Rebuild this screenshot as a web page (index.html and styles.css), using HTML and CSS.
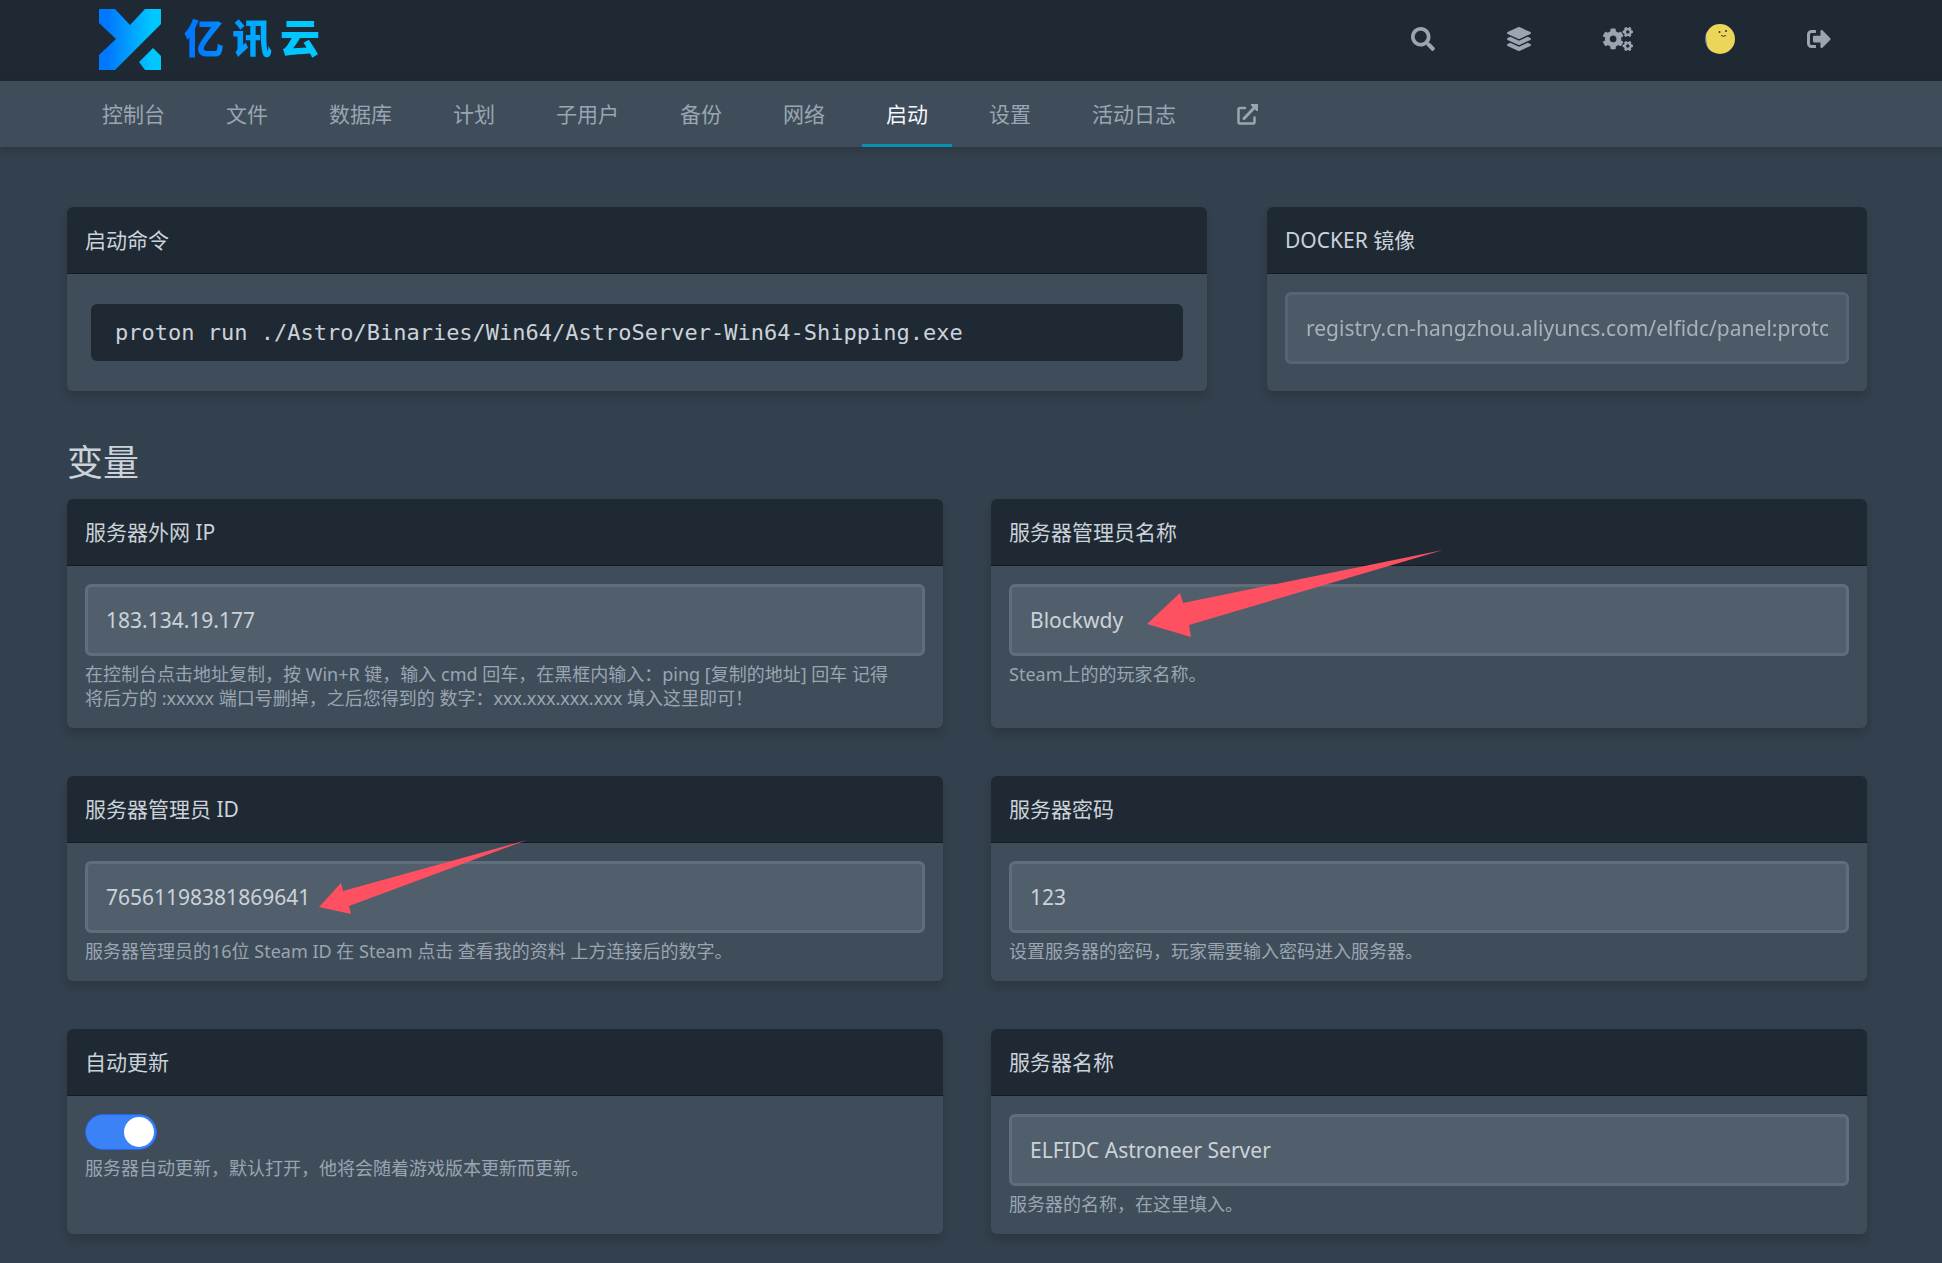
FILE: index.html
```html
<!DOCTYPE html>
<html lang="zh-CN">
<head>
<meta charset="utf-8">
<meta name="viewport" content="width=device-width, initial-scale=1">
<title>启动</title>
<link rel="stylesheet" href="styles.css">
</head>
<body>
<header class="topbar">
  <div class="wrap topbar-inner">
    <a class="logo" href="#">
      <svg class="logo-mark" viewBox="0 0 62 61" aria-hidden="true">
        <defs>
          <linearGradient id="brand" gradientUnits="userSpaceOnUse" x1="8" y1="0" x2="54" y2="0">
            <stop offset="0" stop-color="#0078ff"/>
            <stop offset="1" stop-color="#00c8ff"/>
          </linearGradient>
        </defs>
        <path fill="url(#brand)" d="M0 0h16l15 16L46 0h16v15L16 61H0V46l17-16L0 14zM54 39l8 8v14H46l-6-8z"/>
      </svg>
      <span class="logo-text"><span>亿</span><span>讯</span><span>云</span></span>
    </a>
    <nav class="actions" aria-label="用户">
      <a href="#" aria-label="搜索"><svg class="icon" viewBox="0 0 512 512"><path d="M505 442.7L405.3 343c-4.500-4.500-10.600-7-17-7H372c27.600-35.300 44-79.700 44-128C416 93.100 322.900 0 208 0S0 93.100 0 208s93.100 208 208 208c48.300 0 92.700-16.400 128-44v16.300c0 6.400 2.500 12.500 7 17l99.700 99.700c9.400 9.400 24.600 9.400 33.900 0l28.300-28.300c9.400-9.400 9.400-24.600.1-34zM208 336c-70.700 0-128-57.200-128-128 0-70.700 57.200-128 128-128 70.700 0 128 57.200 128 128 0 70.700-57.200 128-128 128z"/></svg></a>
      <a href="#" aria-label="服务器"><svg class="icon" viewBox="0 0 512 512"><path d="M12.410 148.020l232.940 105.670c6.800 3.090 14.490 3.090 21.290 0l232.940-105.670c16.550-7.510 16.550-32.520 0-40.030L266.650 2.310a25.607 25.607 0 0 0-21.290 0L12.410 107.980c-16.550 7.510-16.550 32.530 0 40.040zm487.180 88.280l-58.090-26.330-161.640 73.270c-7.560 3.430-15.590 5.170-23.860 5.170s-16.290-1.740-23.860-5.170L70.510 209.970l-58.100 26.330c-16.550 7.500-16.550 32.500 0 40l232.940 105.590c6.800 3.080 14.490 3.080 21.290 0L499.590 276.300c16.550-7.500 16.550-32.500 0-40zm0 127.800l-57.870-26.230-161.860 73.370c-7.560 3.430-15.590 5.170-23.860 5.170s-16.290-1.740-23.860-5.170L70.290 337.870 12.410 364.100c-16.550 7.500-16.550 32.500 0 40l232.940 105.590c6.800 3.080 14.490 3.080 21.290 0L499.590 404.100c16.550-7.500 16.550-32.500 0-40z"/></svg></a>
      <a href="#" aria-label="管理"><svg class="icon icon-wide" viewBox="0 0 640 512"><path d="M512.1 191l-8.2 14.3c-3 5.3-9.4 7.5-15.1 5.4-11.8-4.4-22.6-10.7-32.1-18.6-4.6-3.8-5.8-10.5-2.8-15.7l8.2-14.3c-6.9-8-12.3-17.3-15.9-27.4h-16.5c-6 0-11.2-4.3-12.2-10.3-2-12-2.1-24.6 0-37.1 1-6 6.2-10.4 12.2-10.4h16.5c3.6-10.1 9-19.4 15.9-27.4l-8.2-14.3c-3-5.2-1.9-11.9 2.8-15.7 9.5-7.9 20.4-14.2 32.1-18.6 5.7-2.1 12.1.1 15.1 5.4l8.2 14.3c10.5-1.9 21.2-1.9 31.7 0L552 6.3c3-5.3 9.4-7.5 15.1-5.4 11.8 4.4 22.6 10.7 32.1 18.6 4.6 3.8 5.8 10.5 2.8 15.7l-8.2 14.3c6.9 8 12.3 17.3 15.9 27.4h16.5c6 0 11.2 4.3 12.2 10.3 2 12 2.1 24.6 0 37.1-1 6-6.2 10.4-12.2 10.4h-16.5c-3.6 10.1-9 19.4-15.9 27.4l8.2 14.3c3 5.2 1.9 11.9-2.8 15.7-9.5 7.9-20.4 14.2-32.1 18.6-5.7 2.1-12.1-.1-15.1-5.4l-8.2-14.3c-10.4 1.9-21.2 1.9-31.700 0zm-10.500-58.800c38.500 29.600 82.400-14.300 52.800-52.800-38.500-29.700-82.400 14.300-52.800 52.800zM386.300 286.100l33.700 16.800c10.100 5.800 14.500 18.100 10.500 29.100-8.900 24.200-26.400 46.400-42.600 65.800-7.400 8.900-20.200 11.100-30.300 5.300l-29.100-16.800c-16 13.700-34.600 24.600-54.900 31.700v33.600c0 11.600-8.300 21.600-19.700 23.600-24.600 4.200-50.400 4.400-75.900 0-11.500-2-20-11.900-20-23.600V418c-20.300-7.200-38.900-18-54.900-31.700L74 403c-10 5.800-22.900 3.600-30.300-5.300-16.200-19.400-33.300-41.600-42.200-65.700-4-10.900.4-23.200 10.500-29.100l33.300-16.800c-3.900-20.900-3.900-42.400 0-63.400L12 205.800c-10.100-5.800-14.600-18.100-10.500-29 8.900-24.200 26-46.400 42.200-65.800 7.400-8.900 20.200-11.100 30.300-5.300l29.100 16.800c16-13.700 34.600-24.600 54.900-31.700V57.100c0-11.500 8.200-21.500 19.600-23.500 24.600-4.200 50.500-4.400 76-.1 11.500 2 20 11.900 20 23.600v33.600c20.300 7.200 38.900 18 54.900 31.700l29.100-16.800c10-5.800 22.900-3.600 30.300 5.300 16.200 19.400 33.200 41.600 42.100 65.800 4 10.900.1 23.200-10 29.100l-33.700 16.800c3.900 21 3.900 42.500 0 63.500zm-117.600 21.100c59.200-77-28.700-164.900-105.700-105.700-59.200 77 28.700 164.900 105.700 105.700zm243.400 182.700l-8.200 14.300c-3 5.300-9.400 7.500-15.100 5.400-11.800-4.400-22.600-10.700-32.100-18.600-4.600-3.800-5.800-10.500-2.800-15.700l8.200-14.300c-6.900-8-12.300-17.300-15.900-27.400h-16.500c-6 0-11.200-4.300-12.200-10.300-2-12-2.100-24.600 0-37.100 1-6 6.200-10.400 12.200-10.400h16.500c3.600-10.100 9-19.400 15.900-27.400l-8.200-14.300c-3-5.200-1.900-11.900 2.800-15.700 9.500-7.900 20.400-14.200 32.100-18.600 5.700-2.100 12.100.1 15.100 5.400l8.200 14.300c10.500-1.900 21.200-1.900 31.700 0l8.200-14.300c3-5.300 9.400-7.500 15.100-5.400 11.800 4.400 22.600 10.700 32.100 18.600 4.600 3.800 5.800 10.500 2.800 15.700l-8.200 14.300c6.900 8 12.300 17.300 15.900 27.400h16.500c6 0 11.200 4.300 12.200 10.300 2 12 2.100 24.600 0 37.100-1 6-6.200 10.400-12.200 10.400h-16.500c-3.600 10.100-9 19.400-15.900 27.400l8.200 14.300c3 5.200 1.900 11.900-2.800 15.700-9.500 7.900-20.400 14.200-32.100 18.600-5.700 2.100-12.100-.1-15.100-5.400l-8.200-14.300c-10.400 1.900-21.200 1.900-31.700 0zM501.600 431c38.500 29.600 82.400-14.300 52.800-52.800-38.500-29.600-82.400 14.300-52.800 52.800z"/></svg></a>
      <a href="#" aria-label="账户"><svg class="avatar" viewBox="0 0 30 30">
        <defs><clipPath id="round"><circle cx="15" cy="15" r="15"/></clipPath></defs>
        <g clip-path="url(#round)">
          <path fill="#5f86a6" d="M0 8h8v22H0z"/>
          <path fill="#ecd65a" d="M1 11C3 4 8-1 15-1h16v32H5C3 26 1 18 1 11z"/>
          <circle cx="14.500" cy="8" r="1" fill="#3a3520"/>
          <circle cx="21" cy="7" r="1" fill="#3a3520"/>
          <path d="M16 11.500q2.500 1.500 5 0" fill="none" stroke="#3a3520"/>
        </g>
      </svg></a>
      <a href="#" aria-label="退出"><svg class="icon" viewBox="0 0 512 512"><path d="M497 273L329 441c-15 15-41 4.500-41-17v-96H152c-13.300 0-24-10.700-24-24v-96c0-13.300 10.700-24 24-24h136V88c0-21.400 25.900-32 41-17l168 168c9.300 9.400 9.300 24.600 0 34zM192 436v-40c0-6.600-5.400-12-12-12H96c-17.700 0-32-14.300-32-32V160c0-17.700 14.300-32 32-32h84c6.600 0 12-5.400 12-12V76c0-6.600-5.400-12-12-12H96c-53 0-96 43-96 96v192c0 53 43 96 96 96h84c6.600 0 12-5.400 12-12z"/></svg></a>
    </nav>
  </div>
</header>

<nav class="subnav" aria-label="服务器">
  <div class="wrap tabs">
    <a href="#">控制台</a>
    <a href="#">文件</a>
    <a href="#">数据库</a>
    <a href="#">计划</a>
    <a href="#">子用户</a>
    <a href="#">备份</a>
    <a href="#">网络</a>
    <a href="#" class="active" aria-current="page">启动</a>
    <a href="#">设置</a>
    <a href="#">活动日志</a>
    <a href="#" aria-label="在管理面板中打开"><svg class="icon-external" viewBox="0 0 21 21"><path d="M8 4H3Q1.500 4 1.500 5.500V18Q1.500 19.500 3 19.500H16Q17.500 19.500 17.500 18V13.500" fill="none" stroke="currentColor" stroke-width="2.500" stroke-linecap="round"/><path d="M7 14.500L17 4" fill="none" stroke="currentColor" stroke-width="3" stroke-linecap="round"/><path d="M14 0h7v7h-1.500L14 1.500z" fill="currentColor"/></svg></a>
  </div>
</nav>

<main class="wrap content">
  <div class="overview">
    <section class="card">
      <h2 class="card-title">启动命令</h2>
      <div class="card-body command-body">
        <code class="command">proton run ./Astro/Binaries/Win64/AstroServer-Win64-Shipping.exe</code>
      </div>
    </section>
    <section class="card">
      <h2 class="card-title"><label for="image">DOCKER 镜像</label></h2>
      <div class="card-body">
        <input class="field" id="image" type="text" value="registry.cn-hangzhou.aliyuncs.com/elfidc/panel:proton" disabled>
      </div>
    </section>
  </div>

  <h1 class="section-title">变量</h1>

  <div class="variables">
    <section class="card">
      <h2 class="card-title"><label for="ip">服务器外网 IP</label></h2>
      <div class="card-body">
        <input class="field" id="ip" type="text" value="183.134.19.177">
        <p class="hint">在控制台点击地址复制，按 Win+R 键，输入 cmd 回车，在黑框内输入：ping [复制的地址] 回车 记得<span class="phrase">将后方的</span> :xxxxx 端口号删掉，之后您得到的 数字：xxx.xxx.xxx.xxx 填入这里即可！</p>
      </div>
    </section>
    <section class="card">
      <h2 class="card-title"><label for="owner">服务器管理员名称</label></h2>
      <div class="card-body">
        <input class="field" id="owner" type="text" value="Blockwdy">
        <p class="hint">Steam上的的玩家名称。</p>
      </div>
      <svg class="pointer pointer-name" viewBox="0 0 296 87" aria-hidden="true"><path d="M296 0L36 53 33 43 0 74l44 13-2-12z"/></svg>
    </section>
    <section class="card">
      <h2 class="card-title"><label for="owner-id">服务器管理员 ID</label></h2>
      <div class="card-body">
        <input class="field" id="owner-id" type="text" value="76561198381869641">
        <p class="hint">服务器管理员的16位 Steam ID 在 Steam 点击 查看我的资料 上方连接后的数字。</p>
      </div>
      <svg class="pointer pointer-id" viewBox="0 0 208 74" aria-hidden="true"><path d="M208 0L24 51 22 43 0 67l32 7-2-8z"/></svg>
    </section>
    <section class="card">
      <h2 class="card-title"><label for="password">服务器密码</label></h2>
      <div class="card-body">
        <input class="field" id="password" type="text" value="123">
        <p class="hint">设置服务器的密码，玩家需要输入密码进入服务器。</p>
      </div>
    </section>
    <section class="card">
      <h2 class="card-title"><label for="update">自动更新</label></h2>
      <div class="card-body">
        <input class="switch" id="update" type="checkbox" role="switch" checked>
        <p class="hint">服务器自动更新，默认打开，他将会随着游戏版本更新而更新。</p>
      </div>
    </section>
    <section class="card">
      <h2 class="card-title"><label for="name">服务器名称</label></h2>
      <div class="card-body">
        <input class="field" id="name" type="text" value="ELFIDC Astroneer Server">
        <p class="hint">服务器的名称，在这里填入。</p>
      </div>
    </section>
  </div>
</main>
</body>
</html>
```
FILE: styles.css
```css
:root {
  --dark: #1f2933;
  --page: #33404d;
  --panel: #3f4d5a;
  --text: #cbd2d9;
  --muted: #9aa5b1;
}

* {
  box-sizing: border-box;
}

body {
  margin: 0;
  padding-bottom: 28px;
  background: var(--page);
  color: var(--text);
  font-family: "Noto Sans", "Noto Sans CJK SC", sans-serif;
  font-size: 21px;
  line-height: 30px;
}

h1, h2, p {
  margin: 0;
  font-weight: 400;
}

a {
  color: inherit;
  text-decoration: none;
}

.topbar, .subnav, .content {
  padding-right: 8px;
}

.wrap {
  max-width: 1800px;
  margin: 0 auto;
}

.topbar {
  background: var(--dark);
}

.topbar-inner {
  display: flex;
  align-items: center;
  justify-content: space-between;
  height: 81px;
  padding-bottom: 3px;
}

.logo {
  display: flex;
  align-items: center;
  gap: 23px;
  padding-left: 32px;
}

.logo-mark {
  width: 62px;
  height: 61px;
}

.logo-text {
  display: flex;
  gap: 8px;
  padding-bottom: 6px;
  font-family: "Noto Sans CJK SC", sans-serif;
  font-size: 40px;
  font-weight: 900;
  line-height: 60px;
  color: transparent;
  background: linear-gradient(90deg, #0078ff 10%, #00c8ff 80%);
  -webkit-background-clip: text;
  background-clip: text;
}

.actions {
  display: flex;
  align-self: stretch;
  color: var(--muted);
}

.actions a {
  display: flex;
  align-items: center;
  padding: 0 36px;
}

.icon {
  width: 24px;
  height: 24px;
  fill: currentColor;
}

.icon-wide {
  width: 30px;
}

.avatar {
  width: 30px;
  height: 30px;
}

.subnav {
  background: var(--panel);
  box-shadow: 0 4px 8px rgba(0, 0, 0, 0.15);
  color: var(--muted);
}

.tabs {
  display: flex;
  gap: 13px;
  padding-left: 11px;
}

.tabs a {
  display: flex;
  align-items: center;
  height: 66px;
  padding: 0 24px;
  white-space: nowrap;
}

.tabs .active {
  color: #f5f7fa;
  box-shadow: inset 0 -3px #0891b2;
}

.icon-external {
  width: 21px;
  height: 21px;
}

.content {
  max-width: 1808px;
  padding-top: 60px;
}

.overview {
  display: grid;
  grid-template-columns: minmax(0, 19fr) minmax(0, 10fr);
  gap: 60px;
}

.variables {
  display: grid;
  grid-template-columns: repeat(2, minmax(0, 1fr));
  gap: 48px;
}

.section-title {
  margin: 48px 0 12px;
  font-size: 36px;
  line-height: 48px;
}

.card {
  position: relative;
  border-radius: 6px;
  background: var(--panel);
  box-shadow: 0 6px 9px rgba(0, 0, 0, 0.14);
}

.card-title {
  padding: 18px;
  border-bottom: 1px solid #131a20;
  border-radius: 6px 6px 0 0;
  background: var(--dark);
  font-size: 21px;
  line-height: 30px;
}

.card-body {
  padding: 18px;
}

.command-body {
  padding: 30px 24px;
}

.command {
  display: block;
  padding: 12px 24px;
  overflow: hidden;
  border-radius: 6px;
  background: var(--dark);
  font-family: "DejaVu Sans Mono", monospace;
  font-size: 22px;
  line-height: 33px;
  white-space: nowrap;
}

.field {
  display: block;
  width: 100%;
  height: 72px;
  padding: 0 18px;
  border: 3px solid #606d7b;
  border-radius: 6px;
  background: #515f6c;
  color: var(--text);
  font: inherit;
}

.field:disabled {
  opacity: 0.75;
}

.hint {
  margin-top: 6px;
  color: var(--muted);
  font-size: 18px;
  line-height: 24px;
}

.phrase {
  white-space: nowrap;
}

.switch {
  display: flex;
  align-items: center;
  justify-content: flex-end;
  width: 72px;
  height: 36px;
  margin: 0;
  padding: 2px;
  appearance: none;
  border: 1px solid #2563eb;
  border-radius: 18px;
  background: #3b82f6;
}

.switch::before {
  content: "";
  width: 30px;
  height: 30px;
  border-radius: 50%;
  background: #fff;
}

.switch:not(:checked) {
  justify-content: flex-start;
  border-color: #606d7b;
  background: #515f6c;
}

/* Annotation arrows drawn over the cards. */
.pointer {
  position: absolute;
  fill: #ff5061;
  pointer-events: none;
}

.pointer-name {
  top: 51px;
  left: 156px;
  width: 296px;
  height: 87px;
}

.pointer-id {
  top: 64px;
  left: 252px;
  width: 208px;
  height: 74px;
}
```
